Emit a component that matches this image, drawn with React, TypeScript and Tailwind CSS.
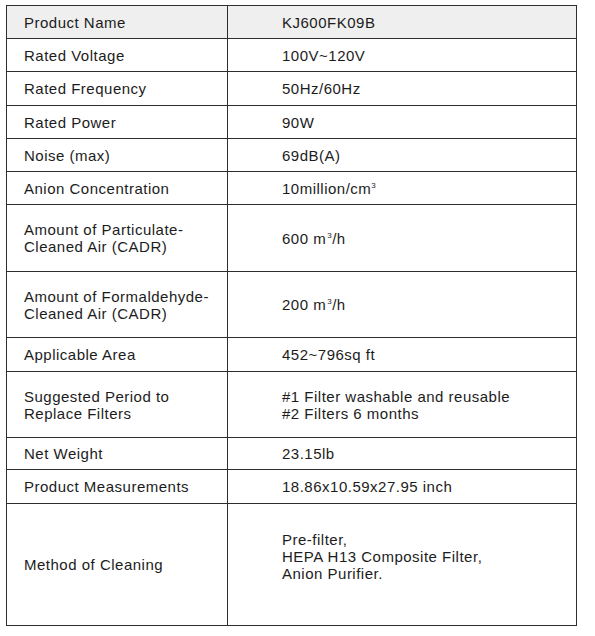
type Spec = {
  label: string[]
  value: React.ReactNode[]
  h: string
  header?: boolean
  valueClass?: string
}

const m3 = (
  <>
    m<sup className="relative -top-[6px] ml-[1px] text-[8px]">3</sup>/h
  </>
)

const rows: Spec[] = [
  { label: ['Product Name'], value: ['KJ600FK09B'], h: 'h-[33px]', header: true },
  { label: ['Rated Voltage'], value: ['100V~120V'], h: 'h-[33px]' },
  { label: ['Rated Frequency'], value: ['50Hz/60Hz'], h: 'h-[34px]' },
  { label: ['Rated Power'], value: ['90W'], h: 'h-[33px]' },
  { label: ['Noise (max)'], value: ['69dB(A)'], h: 'h-[33px]' },
  {
    label: ['Anion Concentration'],
    value: [
      <>
        10million/cm<sup className="relative -top-[6px] text-[8px]">3</sup>
      </>,
    ],
    h: 'h-[33px]',
  },
  {
    label: ['Amount of Particulate-', 'Cleaned Air (CADR)'],
    value: [<>600 {m3}</>],
    h: 'h-[67px]',
  },
  {
    label: ['Amount of Formaldehyde-', 'Cleaned Air (CADR)'],
    value: [<>200 {m3}</>],
    h: 'h-[66px]',
  },
  { label: ['Applicable Area'], value: ['452~796sq ft'], h: 'h-[34px]' },
  {
    label: ['Suggested Period to', 'Replace Filters'],
    value: ['#1 Filter washable and reusable', '#2 Filters 6 months'],
    h: 'h-[66px]',
  },
  { label: ['Net Weight'], value: ['23.15lb'], h: 'h-[32px]' },
  { label: ['Product Measurements'], value: ['18.86x10.59x27.95 inch'], h: 'h-[34px]' },
  {
    label: ['Method of Cleaning'],
    value: ['Pre-filter,', 'HEPA H13 Composite Filter,', 'Anion Purifier.'],
    h: 'h-[121px]',
    valueClass: 'pb-4',
  },
]

export default function App() {
  return (
    <div
      className="min-h-screen bg-white pt-[5px] pl-[6px] text-[15px] leading-[17px] tracking-[0.5px] text-[#1c1c1c]"
      style={{ fontFamily: '"Liberation Sans", Arial, sans-serif' }}
    >
      <div className="flex w-[571px] flex-col border border-[#2e2e2e]">
        {rows.map((row, i) => (
          <div
            key={row.label.join(' ')}
            className={`flex ${row.h} ${i < rows.length - 1 ? 'border-b border-[#2e2e2e]' : ''} ${
              row.header ? 'bg-[#efefef]' : ''
            }`}
          >
            <div className="flex w-[221px] shrink-0 flex-col justify-center border-r border-[#2e2e2e] pl-[17px]">
              {row.label.map((l) => (
                <span key={l}>{l}</span>
              ))}
            </div>
            <div className={`flex flex-1 flex-col justify-center pl-[54px] ${row.valueClass ?? ''}`}>
              {row.value.map((v, j) => (
                <span key={j}>{v}</span>
              ))}
            </div>
          </div>
        ))}
      </div>
    </div>
  )
}
